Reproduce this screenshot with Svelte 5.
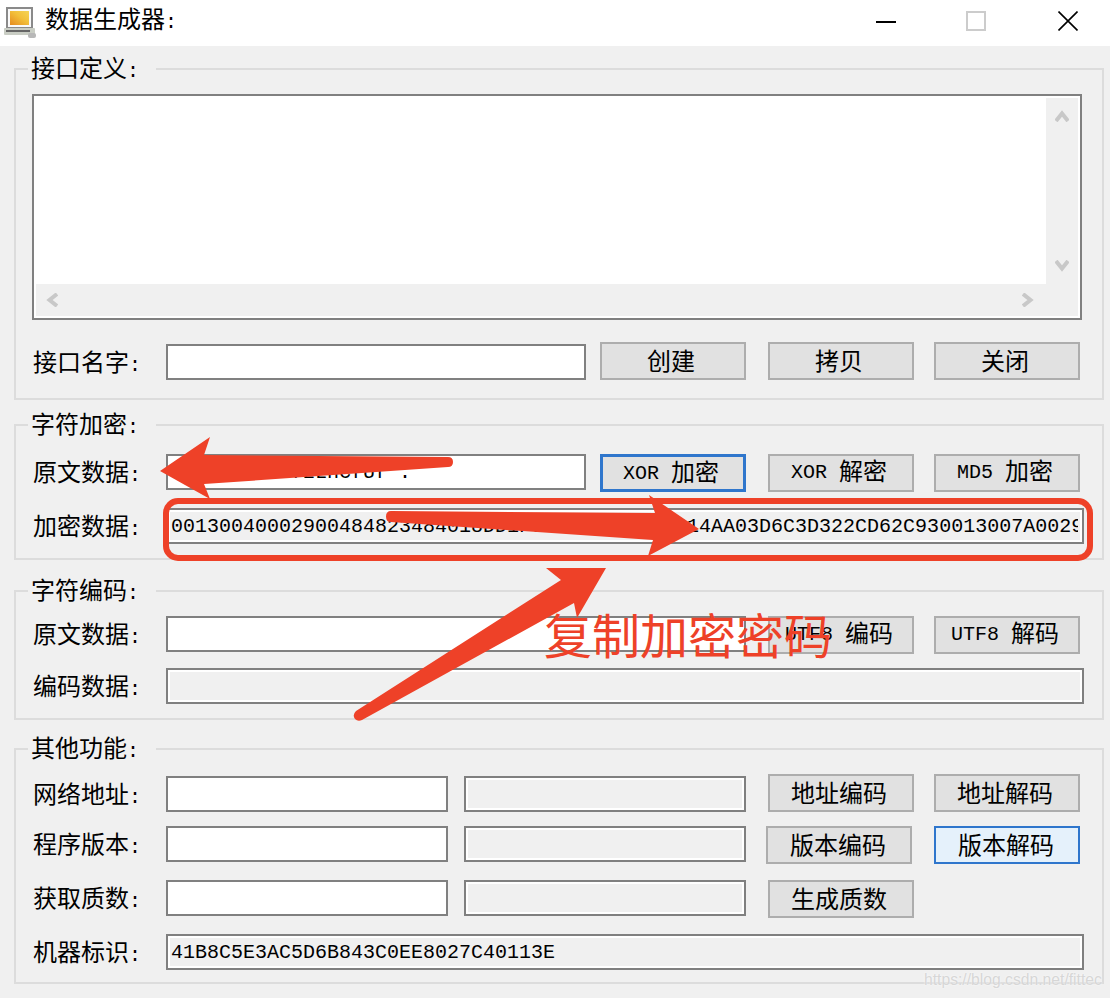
<script>
  const cipher = '0013004000290048482348401' + '8DD1F00E2C5B10A4C2' + '14AA03D6C3D322CD62C930013007A0029';
</script>

<div class="window">
  <header class="titlebar">
    <svg class="appicon" viewBox="0 0 36 36" aria-hidden="true">
      <defs>
        <linearGradient id="scr" x1="0" y1="1" x2="1" y2="0">
          <stop offset="0" stop-color="#e58a1e" />
          <stop offset="0.55" stop-color="#f2bf3a" />
          <stop offset="1" stop-color="#f5d457" />
        </linearGradient>
      </defs>
      <rect x="4" y="3" width="25" height="20" fill="#fafafa" stroke="#8a8a8a" stroke-width="2" />
      <rect x="7" y="6" width="19" height="14" fill="url(#scr)" />
      <rect x="1" y="23" width="31" height="7" rx="1" fill="#c9cdc4" />
      <rect x="3" y="25" width="24" height="2" fill="#666" />
      <rect x="25" y="28" width="8" height="5" rx="2" fill="#b8b8b8" />
    </svg>
    <span class="title">数据生成器<span class="m">:</span></span>
    <div class="controls">
      <svg class="ctl" viewBox="0 0 20 20" aria-hidden="true"><rect y="10" width="20" height="2" fill="#000" /></svg>
      <svg class="ctl maxi" viewBox="0 0 20 20" aria-hidden="true"><rect x="1" y="1" width="18" height="18" fill="none" stroke="#ccc" stroke-width="2" /></svg>
      <svg class="ctl closei" viewBox="0 0 20 20" aria-hidden="true"><path d="M0.5 0.5 19.5 19.5M19.5 0.5 0.5 19.5" stroke="#000" stroke-width="1.6" fill="none" /></svg>
    </div>
  </header>

  <fieldset class="group g1">
    <legend>接口定义<span class="m">:</span></legend>
    <div class="textarea">
      <div class="pane"></div>
      <div class="vbar">
        <svg viewBox="0 0 14 12" class="chev"><path d="M1 11 7 3.500 13 11" /></svg>
        <svg viewBox="0 0 14 12" class="chev"><path d="M1 1 7 8.500 13 1" /></svg>
      </div>
      <div class="hbar">
        <svg viewBox="0 0 12 14" class="chevh"><path d="M11 1 3.500 7 11 13" /></svg>
        <svg viewBox="0 0 12 14" class="chevh"><path d="M1 1 8.500 7 1 13" /></svg>
      </div>
    </div>
    <div class="row inset r1">
      <span class="label">接口名字<span class="m">:</span></span>
      <input class="w420" />
      <button class="btn first">创建</button>
      <button class="btn second">拷贝</button>
      <button class="btn third">关闭</button>
    </div>
  </fieldset>

  <fieldset class="group g2">
    <legend>字符加密<span class="m">:</span></legend>
    <div class="row ra">
      <span class="label">原文数据<span class="m">:</span></span>
      <input class="w420" value="01234567 4f2LhCfUf ." />
      <button class="btn first focus"><span class="m">{'XOR '}</span>加密</button>
      <button class="btn second"><span class="m">{'XOR '}</span>解密</button>
      <button class="btn third"><span class="m">{'MD5 '}</span>加密</button>
    </div>
    <div class="row rb">
      <span class="label">加密数据<span class="m">:</span></span>
      <input class="wfull ro" readonly value={cipher} />
    </div>
  </fieldset>

  <fieldset class="group g3">
    <legend>字符编码<span class="m">:</span></legend>
    <div class="row rc">
      <span class="label">原文数据<span class="m">:</span></span>
      <input class="w580" />
      <button class="btn second"><span class="m">{'UTF8 '}</span>编码</button>
      <button class="btn third"><span class="m">{'UTF8 '}</span>解码</button>
    </div>
    <div class="row rb2">
      <span class="label">编码数据<span class="m">:</span></span>
      <input class="wfull ro" readonly />
    </div>
  </fieldset>

  <fieldset class="group g4">
    <legend>其他功能<span class="m">:</span></legend>
    <div class="row inset rc">
      <span class="label">网络地址<span class="m">:</span></span>
      <input class="w282" />
      <input class="w282 ro gap16" readonly />
      <button class="btn second">地址编码</button>
      <button class="btn third">地址解码</button>
    </div>
    <div class="row rb2">
      <span class="label">程序版本<span class="m">:</span></span>
      <input class="w282" />
      <input class="w282 ro gap16" readonly />
      <button class="btn shifted">版本编码</button>
      <button class="btn shifted-next active">版本解码</button>
    </div>
    <div class="row rd">
      <span class="label">获取质数<span class="m">:</span></span>
      <input class="w282" />
      <input class="w282 ro gap16" readonly />
      <button class="btn second">生成质数</button>
    </div>
    <div class="row rd">
      <span class="label">机器标识<span class="m">:</span></span>
      <input class="wfull ro" readonly value="41B8C5E3AC5D6B843C0EE8027C40113E" />
    </div>
  </fieldset>

  <svg class="annot" viewBox="0 0 1110 998" aria-hidden="true">
    <rect x="166" y="501" width="924" height="57" rx="12" fill="none" stroke="#ee4128" stroke-width="6" />
    <path fill="#ee4128" d="M160 471 210 437 204 455 448 457Q453 457 453 462 453 467 448 467L204 484 210 499Z" />
    <path fill="#ee4128" d="M699 529 649 495 655 513 391 511Q386 511 386 516.500 386 522 391 522L653 540 648 556Z" />
    <path fill="#ee4128" d="M606 568 546 568 561 580 356 711Q352 715 355 719 358 722 362 720L574 603 577 618Z" />
  </svg>
  <span class="note">复制加密密码</span>
  <span class="mark">https://blog.csdn.net/fittec</span>
</div>

<style>
  :global(body) { margin: 0; }

  .window {
    position: relative;
    width: 1110px;
    height: 998px;
    overflow: hidden;
    background: #f0f0f0;
    color: #000;
    font: 24px/28px "Noto Sans CJK SC", "Liberation Sans", sans-serif;
  }

  .m { font-family: "Liberation Mono", monospace; font-size: 20px; }

  .titlebar {
    display: flex;
    align-items: center;
    height: 46px;
    background: #fff;
  }
  .appicon { width: 36px; height: 36px; margin: 0 6px 0 3px; flex: none; }
  .title { margin-top: -6px; }
  .controls { display: flex; margin-left: auto; margin-right: 32px; margin-top: -4px; }
  .ctl { display: block; width: 20px; height: 20px; }
  .maxi { margin-left: 70px; }
  .closei { margin-left: 72px; }

  .group {
    box-sizing: border-box;
    width: 1090px;
    margin: 0 0 0 14px;
    padding: 0;
    border: 2px solid #dcdcdc;
    min-width: 0;
  }
  .group legend {
    box-sizing: border-box;
    height: 28px;
    width: 128px;
    margin-left: 12px;
    padding: 0 0 0 3px;
    line-height: 24px;
  }
  .g1 { margin-top: 9px; padding-bottom: 18px; }
  .g2 { margin-top: 11px; padding-bottom: 14px; }
  .g3 { margin-top: 17px; padding-bottom: 14px; }
  .g4 { margin-top: 15px; padding-bottom: 12px; }

  .textarea {
    box-sizing: border-box;
    display: grid;
    grid-template-columns: 1fr 32px;
    grid-template-rows: 186px 32px;
    width: 1050px;
    height: 226px;
    margin: 11px 0 0 16px;
    padding: 2px;
    border: 2px solid #808080;
    background: #fff;
  }
  .pane { background: #fff; }
  .vbar {
    grid-column: 2;
    grid-row: 1 / 3;
    display: flex;
    flex-direction: column;
    justify-content: space-between;
    align-items: center;
    padding: 12px 0 44px;
    background: #f0f0f0;
  }
  .hbar {
    grid-column: 1;
    grid-row: 2;
    display: flex;
    justify-content: space-between;
    align-items: center;
    padding: 0 12px 0 10px;
    background: #f0f0f0;
  }
  .chev { width: 14px; height: 12px; display: block; }
  .chevh { width: 12px; height: 14px; display: block; }
  .chev path, .chevh path { fill: none; stroke: #c8c8c8; stroke-width: 4; }

  .row { display: flex; align-items: flex-start; }
  .r1 { margin-top: 22px; }
  .ra { margin-top: 15px; }
  .rb { margin-top: 16px; }
  .rc { margin-top: 11px; }
  .rb2 { margin-top: 14px; }
  .rd { margin-top: 16px; }

  .label {
    box-sizing: border-box;
    flex: none;
    width: 150px;
    height: 36px;
    padding-left: 17px;
    line-height: 33px;
  }
  .inset .label, .inset input { margin-top: 2px; }

  input {
    box-sizing: border-box;
    flex: none;
    height: 36px;
    margin: 0;
    padding: 0 3px;
    border: 2px solid #808080;
    border-radius: 0;
    outline: none;
    background: #fff;
    color: #000;
    font: 20px/28px "Liberation Mono", monospace;
  }
  .ro {
    padding: 0 4px 0 3px;
    background: #f0f0f0;
    box-shadow: inset 0 0 0 2px #fff;
  }
  .w420 { width: 420px; }
  .w580 { width: 580px; }
  .w282 { width: 282px; }
  .wfull { width: 918px; }
  .gap16 { margin-left: 16px; }

  .btn {
    box-sizing: border-box;
    flex: none;
    width: 146px;
    height: 38px;
    padding: 0 4px 3px 0;
    border: 2px solid #adadad;
    border-radius: 0;
    background: #e1e1e1;
    color: #000;
    font: 24px/28px "Noto Sans CJK SC", sans-serif;
    white-space: pre;
  }
  .btn .m { vertical-align: 2px; }
  .first { margin-left: 14px; }
  .second { margin-left: 22px; }
  .third { margin-left: 20px; }
  .shifted { margin-left: 20px; padding-right: 2px; }
  .shifted-next { margin-left: 22px; padding-right: 2px; }
  .focus { border: 3px solid #2f76cc; }
  .active { border-color: #2f76cc; background: #e5f1fb; }

  .annot {
    position: absolute;
    left: 0;
    top: 0;
    width: 1110px;
    height: 998px;
    pointer-events: none;
  }
  .note {
    position: absolute;
    left: 544px;
    top: 598px;
    color: #ee4128;
    font-size: 48px;
    line-height: 70px;
    white-space: nowrap;
  }
  .mark {
    position: absolute;
    left: 924px;
    top: 971px;
    color: #d6d6d6;
    font: 15.700px/18px "Liberation Sans", sans-serif;
    text-shadow: 0 0 2px #fff;
    white-space: nowrap;
  }
</style>
